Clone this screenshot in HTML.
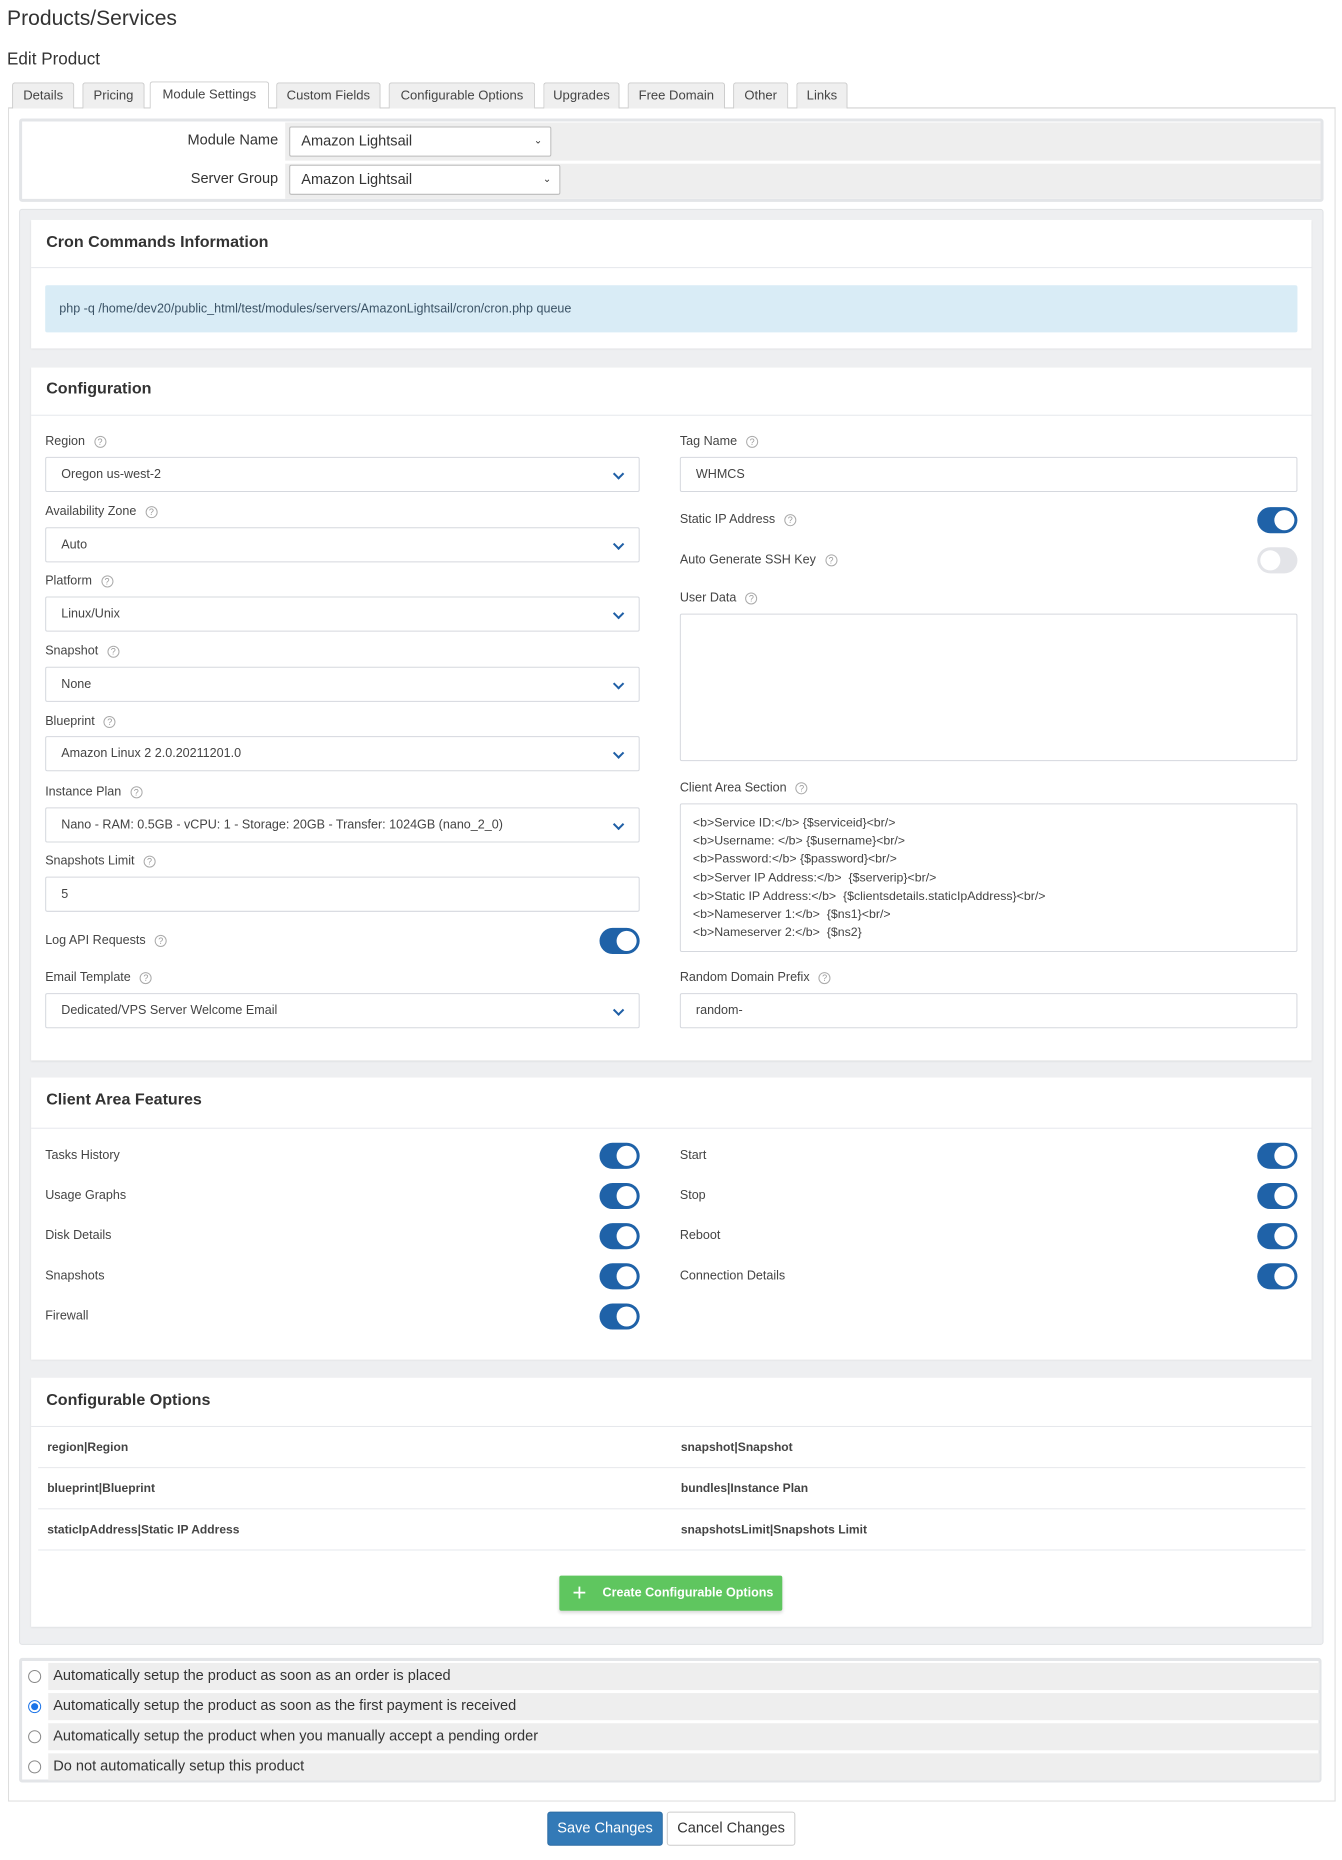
<!DOCTYPE html>
<html><head><meta charset="utf-8"><style>
*{box-sizing:border-box;margin:0;padding:0}
body{width:1342px;height:1852px;background:#fff;font-family:"Liberation Sans",sans-serif;color:#333;position:relative;overflow:hidden}
#w{position:absolute;left:0;top:0;width:1342px;height:1852px;transform:scale(1.0042);transform-origin:0 0}
.a{position:absolute}
.tab{position:absolute;top:82px;height:26px;background:#efefef;border:1px solid #ccc;border-bottom:none;border-radius:3px 3px 0 0;font-size:13px;color:#444;text-align:center;line-height:24px}
.tab.on{background:#fff;height:27px;top:81px}
.sel{position:absolute;background:#fff;border:1px solid #d5d8de;border-radius:2px;font-size:12.5px;color:#444;padding-left:15px;line-height:33px;height:35px}
.sel:after{content:"";position:absolute;right:16px;top:12px;width:6px;height:6px;border-right:2px solid #1f5fa6;border-bottom:2px solid #1f5fa6;transform:rotate(45deg)}
.sel.inp:after{display:none}
.lbl{position:absolute;font-size:12.5px;color:#444}
.q{display:inline-block;width:12px;height:12px;border:1px solid #aaa;border-radius:50%;font-size:9px;line-height:10px;text-align:center;color:#999;margin-left:9px;vertical-align:0}
.tg{position:absolute;width:40px;height:26px;border-radius:13px;background:#1f62a8}
.tg:after{content:"";position:absolute;right:3px;top:3px;width:20px;height:20px;border-radius:50%;background:#fff}
.tg.off{background:#e3e4e8}
.tg.off:after{left:3px;right:auto}
.panel{position:absolute;background:#fff;box-shadow:0 1px 2px rgba(0,0,0,.08)}
.ph{position:absolute;left:15px;font-size:16px;font-weight:bold;color:#333}
.hr{position:absolute;left:0;right:0;height:1px;background:#e6e8ec}
.opt{position:absolute;font-size:12px;font-weight:bold;color:#444}
.rad{position:absolute;left:28px;width:13px;height:13px;border:1px solid #888;border-radius:50%;background:#fff}
.rrow{position:absolute;left:48px;width:1266px;height:27px;background:#eee;font-size:14.5px;color:#333;padding-left:5px;line-height:27px}
</style></head><body><div id="w">
<div class="a" style="left:7px;top:7px;font-size:21px;color:#333">Products/Services</div>
<div class="a" style="left:7px;top:49px;font-size:17px;color:#333">Edit Product</div>

<div class="a" style="left:8px;top:107px;width:1322px;height:1687px;border:1px solid #ddd;border-top:1px solid #ccc"></div>
<div class="tab" style="left:12px;width:62px">Details</div>
<div class="tab" style="left:82px;width:62px">Pricing</div>
<div class="tab on" style="left:149px;width:119px">Module Settings</div>
<div class="tab" style="left:275px;width:104px">Custom Fields</div>
<div class="tab" style="left:387px;width:146px">Configurable Options</div>
<div class="tab" style="left:541px;width:76px">Upgrades</div>
<div class="tab" style="left:625px;width:97px">Free Domain</div>
<div class="tab" style="left:730px;width:55px">Other</div>
<div class="tab" style="left:793px;width:51px">Links</div>

<div class="a" style="left:19px;top:118px;width:1299px;height:83px;border:3px solid #e3e5e8;border-radius:3px;background:#fff"></div>
<div class="a" style="left:284px;top:122px;width:1031px;height:38px;background:#eee"></div>
<div class="a" style="left:284px;top:163px;width:1031px;height:35px;background:#eee"></div>
<div class="a" style="left:150px;top:132px;width:127px;text-align:right;font-size:14.5px">Module Name</div>
<div class="a" style="left:150px;top:170px;width:127px;text-align:right;font-size:14.5px">Server Group</div>
<div class="a" style="left:288px;top:126px;width:261px;height:30px;border:1px solid #bbb;border-radius:2px;background:#fff;font-size:14.5px;line-height:28px;padding-left:11px">Amazon Lightsail<span style="position:absolute;right:8px;font-size:10px">&#8964;</span></div>
<div class="a" style="left:288px;top:164px;width:270px;height:30px;border:1px solid #bbb;border-radius:2px;background:#fff;font-size:14.5px;line-height:28px;padding-left:11px">Amazon Lightsail<span style="position:absolute;right:8px;font-size:10px">&#8964;</span></div>

<div class="a" style="left:19px;top:208px;width:1299px;height:1430px;background:#eeeff1;border:1px solid #e0e2e5;border-radius:3px"></div>

<div class="panel" style="left:31px;top:219px;width:1275px;height:128px">
 <div class="ph" style="top:14px">Cron Commands Information</div>
 <div class="hr" style="top:47px"></div>
 <div class="a" style="left:14px;top:65px;width:1247px;height:47px;background:#d9ecf6;border-radius:2px;font-size:12.5px;color:#3b5366;line-height:47px;padding-left:14px">php -q /home/dev20/public_html/test/modules/servers/AmazonLightsail/cron/cron.php queue</div>
</div>

<div class="panel" style="left:31px;top:366px;width:1275px;height:690px"></div>
<div class="ph" style="left:46px;top:379px">Configuration</div>
<div class="a" style="left:31px;top:413px;width:1275px;height:1px;background:#e6e8ec"></div>

<div class="lbl" style="left:45px;top:432px">Region<span class="q">?</span></div>
<div class="sel" style="left:45px;top:455px;width:592px">Oregon us-west-2</div>
<div class="lbl" style="left:45px;top:502px">Availability Zone<span class="q">?</span></div>
<div class="sel" style="left:45px;top:525px;width:592px">Auto</div>
<div class="lbl" style="left:45px;top:571px">Platform<span class="q">?</span></div>
<div class="sel" style="left:45px;top:594px;width:592px">Linux/Unix</div>
<div class="lbl" style="left:45px;top:641px">Snapshot<span class="q">?</span></div>
<div class="sel" style="left:45px;top:664px;width:592px">None</div>
<div class="lbl" style="left:45px;top:711px">Blueprint<span class="q">?</span></div>
<div class="sel" style="left:45px;top:733px;width:592px">Amazon Linux 2 2.0.20211201.0</div>
<div class="lbl" style="left:45px;top:781px">Instance Plan<span class="q">?</span></div>
<div class="sel" style="left:45px;top:804px;width:592px">Nano - RAM: 0.5GB - vCPU: 1 - Storage: 20GB - Transfer: 1024GB (nano_2_0)</div>
<div class="lbl" style="left:45px;top:850px">Snapshots Limit<span class="q">?</span></div>
<div class="sel inp" style="left:45px;top:873px;width:592px">5</div>
<div class="lbl" style="left:45px;top:929px">Log API Requests<span class="q">?</span></div>
<div class="tg" style="left:597px;top:924px"></div>
<div class="lbl" style="left:45px;top:966px">Email Template<span class="q">?</span></div>
<div class="sel" style="left:45px;top:989px;width:592px">Dedicated/VPS Server Welcome Email</div>

<div class="lbl" style="left:677px;top:432px">Tag Name<span class="q">?</span></div>
<div class="sel inp" style="left:677px;top:455px;width:615px">WHMCS</div>
<div class="lbl" style="left:677px;top:510px">Static IP Address<span class="q">?</span></div>
<div class="tg" style="left:1252px;top:505px"></div>
<div class="lbl" style="left:677px;top:550px">Auto Generate SSH Key<span class="q">?</span></div>
<div class="tg off" style="left:1252px;top:545px"></div>
<div class="lbl" style="left:677px;top:588px">User Data<span class="q">?</span></div>
<div class="a" style="left:677px;top:611px;width:615px;height:147px;border:1px solid #d5d8de;border-radius:2px"></div>
<div class="lbl" style="left:677px;top:777px">Client Area Section<span class="q">?</span></div>
<div class="a" style="left:677px;top:800px;width:615px;height:148px;border:1px solid #d5d8de;border-radius:2px;padding:9px 12px;font-size:12.3px;line-height:18.2px;color:#444">&lt;b&gt;Service ID:&lt;/b&gt; {$serviceid}&lt;br/&gt;<br>&lt;b&gt;Username: &lt;/b&gt; {$username}&lt;br/&gt;<br>&lt;b&gt;Password:&lt;/b&gt; {$password}&lt;br/&gt;<br>&lt;b&gt;Server IP Address:&lt;/b&gt;&nbsp; {$serverip}&lt;br/&gt;<br>&lt;b&gt;Static IP Address:&lt;/b&gt;&nbsp; {$clientsdetails.staticIpAddress}&lt;br/&gt;<br>&lt;b&gt;Nameserver 1:&lt;/b&gt;&nbsp; {$ns1}&lt;br/&gt;<br>&lt;b&gt;Nameserver 2:&lt;/b&gt;&nbsp; {$ns2}</div>
<div class="lbl" style="left:677px;top:966px">Random Domain Prefix<span class="q">?</span></div>
<div class="sel inp" style="left:677px;top:989px;width:615px">random-</div>

<div class="panel" style="left:31px;top:1073px;width:1275px;height:281px"></div>
<div class="ph" style="left:46px;top:1087px">Client Area Features</div>
<div class="a" style="left:31px;top:1123px;width:1275px;height:1px;background:#e6e8ec"></div>
<div class="lbl" style="left:45px;top:1143px">Tasks History</div><div class="tg" style="left:597px;top:1138px"></div>
<div class="lbl" style="left:45px;top:1183px">Usage Graphs</div><div class="tg" style="left:597px;top:1178px"></div>
<div class="lbl" style="left:45px;top:1223px">Disk Details</div><div class="tg" style="left:597px;top:1218px"></div>
<div class="lbl" style="left:45px;top:1263px">Snapshots</div><div class="tg" style="left:597px;top:1258px"></div>
<div class="lbl" style="left:45px;top:1303px">Firewall</div><div class="tg" style="left:597px;top:1298px"></div>
<div class="lbl" style="left:677px;top:1143px">Start</div><div class="tg" style="left:1252px;top:1138px"></div>
<div class="lbl" style="left:677px;top:1183px">Stop</div><div class="tg" style="left:1252px;top:1178px"></div>
<div class="lbl" style="left:677px;top:1223px">Reboot</div><div class="tg" style="left:1252px;top:1218px"></div>
<div class="lbl" style="left:677px;top:1263px">Connection Details</div><div class="tg" style="left:1252px;top:1258px"></div>

<div class="panel" style="left:31px;top:1372px;width:1275px;height:248px"></div>
<div class="ph" style="left:46px;top:1386px">Configurable Options</div>
<div class="a" style="left:31px;top:1420px;width:1275px;height:1px;background:#e6e8ec"></div>
<div class="opt" style="left:47px;top:1434px">region|Region</div>
<div class="opt" style="left:678px;top:1434px">snapshot|Snapshot</div>
<div class="a" style="left:38px;top:1461px;width:1262px;height:1px;background:#e6e8ec"></div>
<div class="opt" style="left:47px;top:1475px">blueprint|Blueprint</div>
<div class="opt" style="left:678px;top:1475px">bundles|Instance Plan</div>
<div class="a" style="left:38px;top:1502px;width:1262px;height:1px;background:#e6e8ec"></div>
<div class="opt" style="left:47px;top:1516px">staticIpAddress|Static IP Address</div>
<div class="opt" style="left:678px;top:1516px">snapshotsLimit|Snapshots Limit</div>
<div class="a" style="left:38px;top:1543px;width:1262px;height:1px;background:#e6e8ec"></div>
<div class="a" style="left:557px;top:1569px;width:222px;height:35px;background:#5fc65f;border-radius:2px;color:#fff;font-size:12.5px;font-weight:bold;line-height:35px;padding-left:43px;box-shadow:0 2px 3px rgba(0,0,0,.15)"><span style="position:absolute;left:13px;top:0;font-size:24px;font-weight:normal">+</span>Create Configurable Options</div>

<div class="a" style="left:19px;top:1651px;width:1297px;height:124px;border:3px solid #e3e5e8;border-radius:3px;background:#fff"></div>
<div class="rrow" style="top:1656px">Automatically setup the product as soon as an order is placed</div>
<div class="rrow" style="top:1686px">Automatically setup the product as soon as the first payment is received</div>
<div class="rrow" style="top:1716px">Automatically setup the product when you manually accept a pending order</div>
<div class="rrow" style="top:1746px">Do not automatically setup this product</div>
<div class="rad" style="top:1663px"></div>
<div class="rad" style="top:1693px;border-color:#1a73e8"><div style="margin:2px;width:7px;height:7px;border-radius:50%;background:#1a73e8"></div></div>
<div class="rad" style="top:1723px"></div>
<div class="rad" style="top:1753px"></div>

<div class="a" style="left:545px;top:1804px;width:115px;height:34px;background:#337ab7;border:1px solid #2e6da4;border-radius:3px;color:#fff;font-size:14.5px;text-align:center;line-height:32px">Save Changes</div>
<div class="a" style="left:664px;top:1804px;width:128px;height:34px;background:#fff;border:1px solid #ccc;border-radius:3px;color:#333;font-size:14.5px;text-align:center;line-height:32px">Cancel Changes</div>
</div></body></html>
